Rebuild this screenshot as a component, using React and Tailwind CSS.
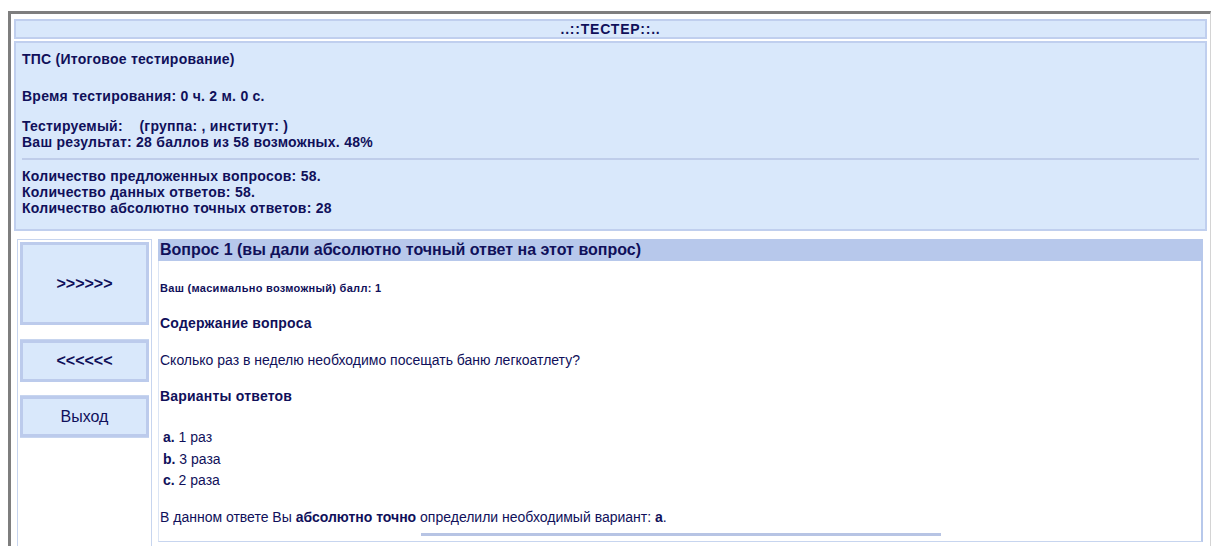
export default function App() {
  const stats = [
    'Количество предложенных вопросов: 58.',
    'Количество данных ответов: 58.',
    'Количество абсолютно точных ответов: 28',
  ];

  const answers = [
    { key: 'a.', text: '1 раз' },
    { key: 'b.', text: '3 раза' },
    { key: 'c.', text: '2 раза' },
  ];

  return (
    <div className="min-h-[546px] bg-white pt-[11px] pl-[8px] font-['Liberation_Sans',Arial,sans-serif] text-[#10105a]">
      <div className="min-h-[535px] border-t-[3px] border-l-[3px] border-t-[#7e7e7e] border-l-[#7e7e7e] border-r border-r-[#d4d4d4] pl-[3px] pr-[3px] pt-[5px]">
        {/* title strip */}
        <div className="flex h-[20px] items-center justify-center border-2 border-[#c0cfee] bg-[#d9e8fb] text-[14px] font-bold tracking-[0.8px]">
          ..::ТЕСТЕР::..
        </div>

        {/* summary panel */}
        <div className="mt-[2px] h-[190px] border-2 border-[#c0cfee] bg-[#d9e8fb] px-[6px] pt-[8px] text-[14px] font-bold leading-[16px] tracking-[0.25px]">
          <div>ТПС (Итоговое тестирование)</div>
          <div className="mt-[21px]">Время тестирования: 0 ч. 2 м. 0 с.</div>
          <div className="mt-[14px]">Тестируемый:&nbsp;&nbsp;&nbsp; (группа: , институт: )</div>
          <div>Ваш результат: 28 баллов из 58 возможных. 48%</div>
          <div className="mt-[8px] mb-[8px] h-[2px] bg-[#bfcdea]" />
          {stats.map((s) => (
            <div key={s}>{s}</div>
          ))}
        </div>

        <div className="mt-[8px] flex items-start gap-[6px] pl-[3px] pr-[4px]">
          {/* navigation column */}
          <div className="flex h-[320px] w-[135px] shrink-0 flex-col border border-[#c7d5ef] p-[2px]">
            <button className="flex h-[83px] items-center justify-center border-[3px] border-[#bccbec] bg-[#d9e8fb] text-[16px] font-bold text-[#10105a]">
              &gt;&gt;&gt;&gt;&gt;&gt;
            </button>
            <div className="h-[15px] border-b border-[#c7d5ef]" />
            <button className="flex h-[42px] items-center justify-center border-[3px] border-[#bccbec] bg-[#d9e8fb] text-[16px] font-bold text-[#10105a]">
              &lt;&lt;&lt;&lt;&lt;&lt;
            </button>
            <div className="h-[14px] border-b border-[#c7d5ef]" />
            <button className="flex h-[41px] items-center justify-center border-[3px] border-[#bccbec] bg-[#d9e8fb] text-[16px] text-[#10105a]">
              Выход
            </button>
            <div className="h-[1px] bg-[#c7d5ef]" />
          </div>

          {/* question body */}
          <div className="flex-1">
            <div className="flex h-[22px] items-center bg-[#b7c8eb] pl-[2px] text-[16px] font-bold">
              Вопрос 1 (вы дали абсолютно точный ответ на этот вопрос)
            </div>
            <div className="h-[281px] border-l border-r-2 border-b border-l-[#dbe5f5] border-r-[#b7c8eb] border-b-[#c7d5ef] pl-[1px] pt-[19px] text-[14px] leading-[16px]">
              <div className="text-[11px] font-bold tracking-[0.3px]">Ваш (масимально возможный) балл: 1</div>
              <div className="mt-[19px] font-bold tracking-[0.2px]">Содержание вопроса</div>
              <div className="mt-[21px]">Сколько раз в неделю необходимо посещать баню легкоатлету?</div>
              <div className="mt-[20px] font-bold tracking-[0.2px]">Варианты ответов</div>
              <div className="mt-[23px] pl-[3px] leading-[21.5px]">
                {answers.map((a) => (
                  <div key={a.key}>
                    <b>{a.key}</b> {a.text}
                  </div>
                ))}
              </div>
              <div className="mt-[17px]">
                В данном ответе Вы <b>абсолютно точно</b> определили необходимый вариант: <b>а</b>.
              </div>
              <div className="ml-[261px] mt-[8px] h-[3px] w-[520px] bg-[#b7c4e4]" />
            </div>
          </div>
        </div>
      </div>
    </div>
  );
}
